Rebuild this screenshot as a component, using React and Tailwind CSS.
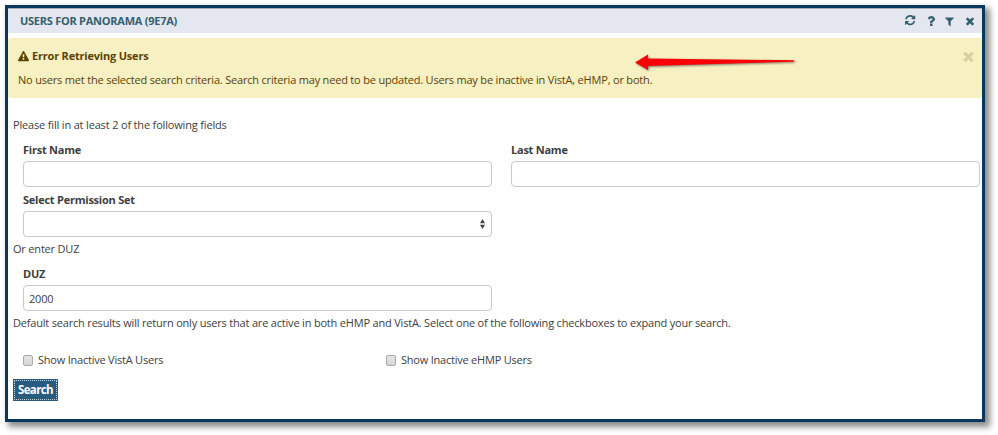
import React from "react";

const PATHS = {
  refresh:
    "M1511 928q0 5-1 7-64 268-268 434.5t-478 166.5q-146 0-282.5-55t-243.5-157l-129 129q-19 19-45 19t-45-19-19-45v-448q0-26 19-45t45-19h448q26 0 45 19t19 45-19 45l-137 137q71 66 161 102t187 36q134 0 250-65t186-179q11-17 53-117 8-23 30-23h192q13 0 22.5 9.5t9.5 22.5zm25-800v448q0 26-19 45t-45 19h-448q-26 0-45-19t-19-45 19-45l138-138q-148-137-349-137-134 0-250 65t-186 179q-11 17-53 117-8 23-30 23h-199q-13 0-22.5-9.5t-9.5-22.5v-7q65-268 270-434.5t480-166.5q146 0 284 55.5t245 156.5l130-129q19-19 45-19t45 19 19 45z",
  question:
    "M1088 1256v240q0 16-12 28t-28 12h-240q-16 0-28-12t-12-28v-240q0-16 12-28t28-12h240q16 0 28 12t12 28zm316-600q0 54-15.5 101t-35 76.5-55 59.5-57.5 43.5-61 35.5q-41 23-68.5 65t-27.5 67q0 17-12 32.5t-28 15.5h-240q-15 0-25.5-18.5t-10.5-37.5v-45q0-83 65-156.5t143-108.5q59-27 84-56t25-76q0-42-46.5-74t-107.5-32q-65 0-108 29-35 25-107 115-13 16-31 16-12 0-25-8l-164-125q-13-10-15.5-25t5.5-28q160-266 464-266 80 0 161 31t146 83 106 127.5 41 158.5z",
  filter:
    "M1595 295q17 41-14 70l-493 493v742q0 42-39 59-13 5-25 5-27 0-45-19l-256-256q-19-19-19-45v-486l-493-493q-31-29-14-70 17-39 59-39h1280q42 0 59 39z",
  times:
    "M1490 1322q0 40-28 68l-136 136q-28 28-68 28t-68-28l-294-294-294 294q-28 28-68 28t-68-28l-136-136q-28-28-28-68t28-68l294-294-294-294q-28-28-28-68t28-68l136-136q28-28 68-28t68 28l294 294 294-294q28-28 68-28t68 28l136 136q28 28 28 68t-28 68l-294 294 294 294q28 28 28 68z",
  warning:
    "M1024 1375v-190q0-14-9.5-23.5t-22.5-9.5h-192q-13 0-22.5 9.5t-9.5 23.5v190q0 14 9.5 23.5t22.5 9.5h192q13 0 22.5-9.5t9.5-23.5zm-2-374l18-459q0-12-10-19-13-11-24-11h-220q-11 0-24 11-10 7-10 21l17 457q0 10 10 16.5t24 6.5h185q14 0 23.5-6.5t10.5-16.5zm-14-934l768 1408q35 63-2 126-17 29-46.5 46t-63.5 17h-1536q-34 0-63.5-17t-46.5-46q-37-63-2-126l768-1408q17-31 47-49t65-18 65 18 47 49z",
};

function Icon({ name, viewBox = "0 0 1792 1792", className }) {
  return (
    <svg viewBox={viewBox} className={className} fill="currentColor" aria-hidden="true">
      <path d={PATHS[name]} />
    </svg>
  );
}

function Field({ label, children }) {
  return (
    <label className="block w-[469px] shrink-0">
      <span className="block h-5 pb-1 leading-[17px] font-bold tracking-[-0.24px]">{label}</span>
      {children}
    </label>
  );
}

const inputClass =
  "block h-[26px] w-full rounded-[4px] border border-[#c9c9c9] bg-white px-[5px] text-[11px] tracking-[-0.19px] outline-none";

function Checkbox({ label }) {
  return (
    <label className="flex w-[363px] items-center gap-[5px]">
      <input
        type="checkbox"
        className="h-[11px] w-[10px] appearance-none rounded-[2px] border border-[#a9a9a9] bg-linear-to-b from-[#e4e4e4] to-[#d6d6d6]"
      />
      <span>{label}</span>
    </label>
  );
}

export default function App() {
  return (
    <div className="h-[435px] w-[998px] overflow-hidden bg-white pt-[5px] pl-[5px] font-['Open_Sans',sans-serif] text-[11px] leading-4 tracking-[-0.19px] text-[#404040]">
      <div className="relative h-[417px] w-[980px] border-[3px] border-[#0a375e] bg-white shadow-[4px_4px_6px_1px_rgba(0,0,0,0.45)]">
        <header className="flex h-[25px] items-center justify-between border-t border-[#a9afb0] bg-[#e4e7ef] pr-[6px] pl-3 text-[#34606f]">
          <h1 className="font-bold tracking-[-0.25px]">USERS FOR PANORAMA (9E7A)</h1>
          <div className="flex items-center">
            <Icon name="refresh" className="mr-[7px] size-[12px]" />
            <Icon name="question" className="mr-[6px] size-[14px]" />
            <Icon name="filter" className="mr-[9px] size-[11px]" />
            <Icon name="times" className="size-3" />
          </div>
        </header>

        <section className="mt-[5px] flex h-[60px] justify-between rounded-[3px] bg-[#f7f0c3] pt-[10px] pr-[6px] pl-[10px] text-[#5b4205]">
          <div>
            <h2 className="flex items-center gap-[3px] font-bold tracking-[-0.2px]">
              <Icon name="warning" className="size-[11px]" />
              Error Retrieving Users
            </h2>
            <p className="mt-2">
              No users met the selected search criteria. Search criteria may need to be updated.
              Users may be inactive in VistA, eHMP, or both.
            </p>
          </div>
          <Icon name="times" className="mt-[1px] size-[15px] text-[#d9cf9b]" />
        </section>

        <form className="px-[5px] pt-[19px]" onSubmit={(e) => e.preventDefault()}>
          <p className="tracking-[-0.17px]">Please fill in at least 2 of the following fields</p>
          <div className="mt-2 flex gap-[19px] pl-[10px]">
            <Field label="First Name">
              <input className={inputClass} />
            </Field>
            <Field label="Last Name">
              <input className={inputClass} />
            </Field>
          </div>
          <div className="mt-1 pl-[10px]">
            <Field label="Select Permission Set">
              <span className="flex h-[26px] items-center justify-end rounded-[4px] border border-[#c9c9c9] pr-[6px]">
                <svg viewBox="0 0 5 10" className="h-[10px] w-[5px]" fill="#404040">
                  <path d="M0 4.2L2.5 0L5 4.2ZM0 5.8L2.5 10L5 5.8Z" />
                </svg>
              </span>
            </Field>
          </div>
          <p className="mt-1">Or enter DUZ</p>
          <div className="mt-2 pl-[10px]">
            <Field label="DUZ">
              <input className={inputClass} defaultValue="2000" />
            </Field>
          </div>
          <p className="mt-1">
            Default search results will return only users that are active in both eHMP and VistA.
            Select one of the following checkboxes to expand your search.
          </p>
          <div className="mt-[21px] flex pl-[10px] tracking-[-0.22px]">
            <Checkbox label="Show Inactive VistA Users" />
            <Checkbox label="Show Inactive eHMP Users" />
          </div>
          <button className="mt-[11px] flex h-[22px] w-[45px] items-center justify-center bg-[#285b7e] p-px text-[11.5px] font-bold tracking-[-0.6px] text-white">
            <span className="flex h-full w-full items-center justify-center border border-dotted border-[#c4d3de]">
              Search
            </span>
          </button>
        </form>

        <svg
          viewBox="0 0 164 20"
          className="absolute top-[45px] left-[625px] h-5 w-[164px] overflow-visible [filter:drop-shadow(1px_1px_1px_rgba(0,0,0,0.5))]"
        >
          <path d="M2 9.5L15 1.5V5.5L161 7.3V8.8L15 13V17Z" fill="#fb0007" />
        </svg>
      </div>
    </div>
  );
}
